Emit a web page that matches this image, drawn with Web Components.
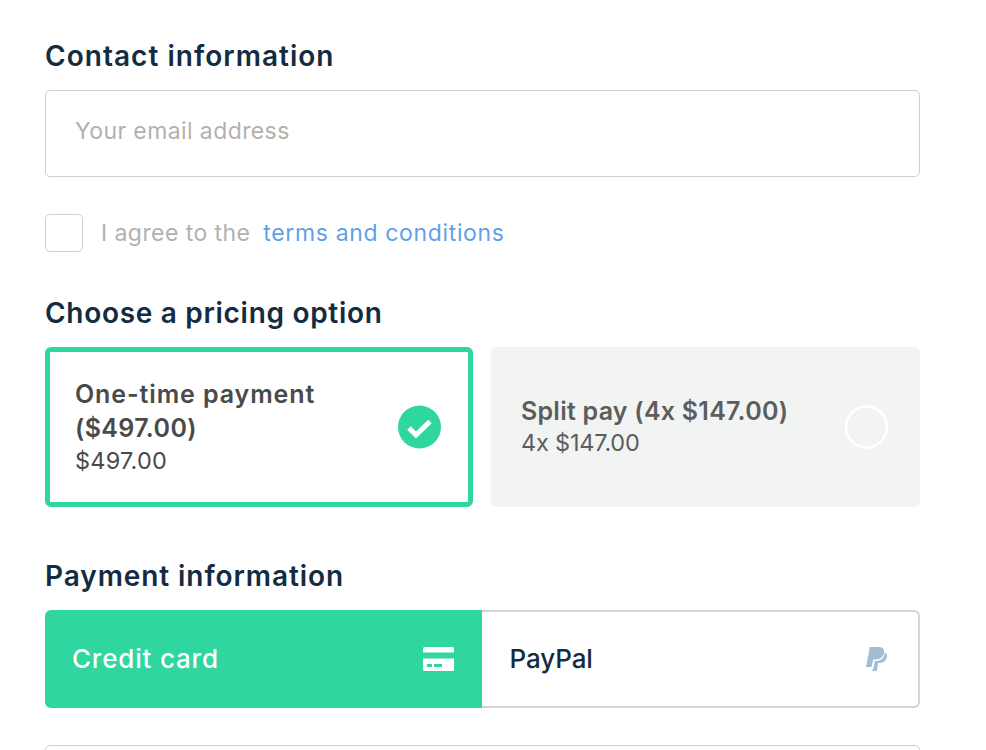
<!DOCTYPE html>
<html>
<head>
<meta charset="utf-8">
<title>Checkout</title>
<style>
  html, body { margin: 0; height: 750px; overflow: hidden; background: #fff; }
  body { font: 400 24px Inter, "Liberation Sans", sans-serif; }
</style>
</head>
<body>
<checkout-form></checkout-form>

<script>
(() => {
  const FONT = 'Inter, "Liberation Sans", sans-serif';

  class SectionTitle extends HTMLElement {
    constructor() {
      super();
      this.attachShadow({ mode: 'open' });
      this.shadowRoot.innerHTML = `
        <style>
          :host { display: block; padding: 1px 0; font: 600 28px/32px ${FONT}; letter-spacing: 0.92px; color: #142c41; }
        </style>
        <slot></slot>
      `;
    }
  }

  class TextField extends HTMLElement {
    constructor() {
      super();
      this.attachShadow({ mode: 'open' });
      this.shadowRoot.innerHTML = `
        <style>
          :host { display: block; }
          input {
            display: block;
            box-sizing: border-box;
            width: 100%;
            height: 87px;
            padding: 0 29px 6px;
            border: 1px solid #cfcfcf;
            border-radius: 5px;
            background: #fff;
            font: 400 23px ${FONT};
            letter-spacing: 0.4px;
            color: #142c41;
            outline: none;
          }
          input::placeholder { color: #b3b0ad; opacity: 1; }
        </style>
        <input type="text" placeholder="${this.getAttribute('placeholder') || ''}">
      `;
    }
  }

  class AgreeCheck extends HTMLElement {
    constructor() {
      super();
      this.attachShadow({ mode: 'open' });
      this.shadowRoot.innerHTML = `
        <style>
          :host { display: flex; align-items: center; gap: 18px; font: 400 23px ${FONT}; letter-spacing: 0.43px; color: #b3b0ad; }
          .box { width: 38px; height: 38px; box-sizing: border-box; border: 1px solid #cfcfcf; border-radius: 5px; }
          a { color: #649fe6; text-decoration: none; margin-left: 6px; letter-spacing: 0.65px; }
        </style>
        <span class="box"></span>
        <span>I agree to the <a href="#"><slot></slot></a></span>
      `;
    }
  }

  class PriceOption extends HTMLElement {
    constructor() {
      super();
      this.attachShadow({ mode: 'open' });
      const selected = this.hasAttribute('selected');
      const mark = selected
        ? `<svg width="44" height="44" viewBox="0 0 44 44">
             <circle cx="21.500" cy="22" r="21.500" fill="#2fd6a0"/>
             <path d="M11 23l7 7 14-13.500" fill="none" stroke="#fff" stroke-width="5"/>
           </svg>`
        : `<svg width="44" height="44" viewBox="0 0 44 44">
             <circle cx="21.500" cy="22" r="20.500" fill="none" stroke="#fff" stroke-width="2.500"/>
           </svg>`;
      this.shadowRoot.innerHTML = `
        <style>
          :host {
            display: flex;
            align-items: center;
            justify-content: space-between;
            box-sizing: border-box;
            height: 160px;
            border-radius: 6px;
            color: #4a4a4a;
            background: #f2f4f3;
            padding: 0 31.5px 0 30px;
          }
          :host([selected]) { background: #fff; border: 5px solid #2fd6a0; padding: 0 26.5px 0 25px; }
          .text { width: 290px; margin-top: 2px; }
          :host(:not([selected])) .text { color: #5d5d5d; width: 300px; margin-top: 0; }
          .title { font: 600 25px/33.5px ${FONT}; }
          .sub { font: 400 23.5px/32.5px ${FONT}; letter-spacing: 0.2px; }
          :host(:not([selected])) .title, :host(:not([selected])) .sub { line-height: 32px; }
          svg { display: block; flex: none; }
        </style>
        <div class="text">
          <div class="title"><slot name="title"></slot></div>
          <div class="sub"><slot name="sub"></slot></div>
        </div>
        ${mark}
      `;
    }
  }

  class PayTabs extends HTMLElement {
    constructor() {
      super();
      this.attachShadow({ mode: 'open' });
      this.shadowRoot.innerHTML = `
        <style>
          :host { display: grid; grid-template-columns: 437px 438px; height: 98px; font: 450 26px ${FONT}; }
          .tab { display: flex; align-items: center; justify-content: space-between; box-sizing: border-box; }
          .tab span { margin-bottom: 2px; }
          .card { background: #2fd6a0; color: #fff; border-radius: 6px 0 0 6px; padding: 0 28px 0 27px; letter-spacing: 0.8px; }
          .paypal {
            color: #142c41;
            border: 2px solid #d3d3d3;
            border-left: 0;
            border-radius: 0 6px 6px 0;
            padding: 0 31px 0 27.5px;
            letter-spacing: -0.1px;
          }
          svg { display: block; }
        </style>
        <div class="tab card">
          <span>Credit card</span>
          <svg width="31" height="24" viewBox="0 0 31 24">
            <path d="M1.500 0h28A1.500 1.500 0 0 1 31 1.500V5.500H0V1.500A1.500 1.500 0 0 1 1.500 0z" fill="#fff"/>
            <path d="M0 11.500h31v11A1.500 1.500 0 0 1 29.500 24h-28A1.500 1.500 0 0 1 0 22.500z" fill="#fff"/>
            <rect x="4" y="17" width="5" height="3" fill="#2fd6a0"/>
            <rect x="11" y="17" width="8" height="3" fill="#2fd6a0"/>
          </svg>
        </div>
        <div class="tab paypal">
          <span>PayPal</span>
          <svg width="21" height="24" viewBox="0 0 22 25">
            <path d="M4 0h9c4 0 6.500 2 6 5.500C18.300 10.500 15 13 10.500 13H7.500L5.800 21H0z" fill="#a3bdd6"/>
            <path d="M19.700 5.500c2 1.200 2.600 3 2.100 5.500-.8 3.700-3.500 5.700-7.200 5.700h-2L11.500 25H6.700l.4-2.500h.6L9.200 14.500h1.800c5 0 8.200-3 8.700-9z" fill="#a3bdd6"/>
          </svg>
        </div>
      `;
    }
  }

  class CheckoutForm extends HTMLElement {
    constructor() {
      super();
      this.attachShadow({ mode: 'open' });
      this.shadowRoot.innerHTML = `
        <style>
          :host { display: block; width: 875px; padding: 39px 0 0 45px; }
          .contact { letter-spacing: 1.03px; }
          .email { margin-top: 17px; }
          .agree { margin-top: 37px; }
          .pricing { margin-top: 44px; letter-spacing: 0.7px; }
          .options { display: grid; grid-template-columns: 428px 429px; gap: 18px; margin-top: 17px; }
          .payment { margin-top: 52px; }
          .tabs { margin-top: 17px; }
          .next { margin-top: 37px; }
        </style>
        <section-title class="contact">Contact information</section-title>
        <text-field class="email" placeholder="Your email address"></text-field>
        <agree-check class="agree">terms and conditions</agree-check>
        <section-title class="pricing">Choose a pricing option</section-title>
        <div class="options">
          <price-option selected>
            <span slot="title"><span style="letter-spacing: 0.9px">One-time payment</span> <span style="letter-spacing: 0.37px">($497.00)</span></span>
            <span slot="sub">$497.00</span>
          </price-option>
          <price-option>
            <span slot="title" style="letter-spacing: 0.25px">Split pay (4x $147.00)</span>
            <span slot="sub" style="letter-spacing: -0.2px">4x $147.00</span>
          </price-option>
        </div>
        <section-title class="payment">Payment information</section-title>
        <pay-tabs class="tabs"></pay-tabs>
        <text-field class="next"></text-field>
      `;
    }
  }

  customElements.define('section-title', SectionTitle);
  customElements.define('text-field', TextField);
  customElements.define('agree-check', AgreeCheck);
  customElements.define('price-option', PriceOption);
  customElements.define('pay-tabs', PayTabs);
  customElements.define('checkout-form', CheckoutForm);
})();
</script>
</body>
</html>
